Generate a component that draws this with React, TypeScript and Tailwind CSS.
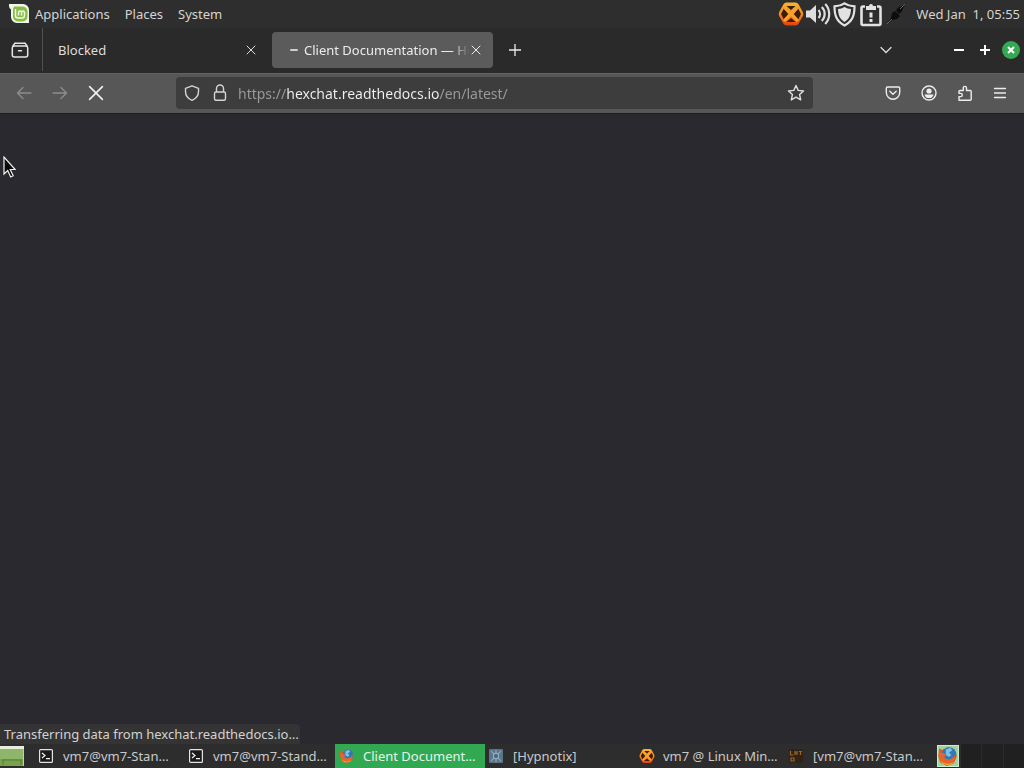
import React from "react";

type IconProps = { className?: string };

const MintLogo = () => (
  <svg width="20" height="20" viewBox="0 0 20 20" aria-hidden="true">
    <path d="M0 0h14a6 6 0 0 1 6 6v13H8a6 6 0 0 1-6-6V5.500A4 4 0 0 1 0 2z" fill="#f1f6ea" />
    <path d="M5 2.500h8.500a5 5 0 0 1 5 5v5a5 5 0 0 1-5 5h-4.500a5 5 0 0 1-5-5V5z" fill="#86be43" />
    <path d="M6.500 5v6.500a2.500 2.500 0 0 0 2.500 2.500h4a2.500 2.500 0 0 0 2.500-2.500V8.500a1.500 1.500 0 0 0-3 0v3M12.500 8.500a1.500 1.500 0 0 0-3 0v3" fill="none" stroke="#f5faee" strokeWidth="1.500" />
  </svg>
);

const HexChatIcon = ({ size }: { size: number }) => (
  <svg width={size} height={size} viewBox="0 0 26 26" aria-hidden="true">
    <defs>
      <linearGradient id="hexFill" x1="0" y1="0" x2="0" y2="1">
        <stop offset="0" stopColor="#fbb62c" />
        <stop offset="0.500" stopColor="#f58a1f" />
        <stop offset="1" stopColor="#e2400f" />
      </linearGradient>
    </defs>
    <path d="M8.500 1.500h9q2 0 3 1.800l4.300 7.700q1 2 0 4l-4.300 7.700q-1 1.800-3 1.800h-9q-2 0-3-1.800L1.200 15q-1-2 0-4l4.300-7.700q1-1.800 3-1.800z" fill="url(#hexFill)" />
    <path d="M8.500 5h9l-4.500 4zM8.500 21h9L13 17zM5.800 7.500l4.400 5.500-4.400 5.500L3 13zM20.200 7.500L15.800 13l4.400 5.500L23 13z" fill="#3b1d10" />
    <path d="M6 6l14 14M20 6L6 20" stroke="#fba22a" strokeWidth="3" />
  </svg>
);

const VolumeIcon = () => (
  <svg width="25" height="24" viewBox="0 0 25 24" fill="none" stroke="#dedede" strokeWidth="2.200" aria-hidden="true">
    <path d="M0 8.500h4L10 3v18l-6-5.500H0z" fill="#dedede" stroke="none" />
    <path d="M12.500 8a6 6 0 0 1 0 8M15.800 5a10 10 0 0 1 0 14M19.200 2a14.500 14.500 0 0 1 0 20" />
  </svg>
);

const UpdateShield = () => (
  <svg width="23" height="25" viewBox="0 0 23 25" aria-hidden="true">
    <path d="M11.500 1.400C8.500 3.500 5.500 4.200 1.500 4.400c0 9 2 14.800 10 19.100 8-4.300 10-10.100 10-19.100-4-.2-7-.9-10-3z" fill="none" stroke="#e2e2e2" strokeWidth="2.200" />
    <path d="M11.500 5C9.300 6.300 7.400 6.800 5 7c.3 6.200 1.800 10 6.500 12.900C16.200 17 17.700 13.200 18 7c-2.400-.2-4.300-.7-6.500-2z" fill="#e2e2e2" />
  </svg>
);

const ReportIcon = () => (
  <svg width="22" height="25" viewBox="0 0 22 25" aria-hidden="true">
    <path d="M5 4.500H3a1.500 1.500 0 0 0-1.500 1.500v15.500A1.500 1.500 0 0 0 3 23h16a1.500 1.500 0 0 0 1.500-1.500V6A1.500 1.500 0 0 0 19 4.500h-2" fill="none" stroke="#e2e2e2" strokeWidth="2.600" />
    <path d="M6 8V4h3a2 2 0 0 1 4 0h3v4z" fill="#e2e2e2" />
    <path d="M9.500 10.500h3v5h-3zM9.500 17h3v3h-3z" fill="#e2e2e2" />
  </svg>
);

const PlugIcon = () => (
  <svg width="20" height="22" viewBox="0 0 20 22" aria-hidden="true">
    <path d="M1 21l4-6 1-5 3-2 5 5-3 3-5 1zM10 7l3-3 5-2 2-2-2.500 4-2 5-3 2z" fill="#0c0c0c" />
    <path d="M1 21l5-5M14 6l5-5" stroke="#686868" />
  </svg>
);

const RecentIcon = () => (
  <svg width="18" height="18" viewBox="0 0 18 18" fill="none" stroke="#e6e6e6" strokeWidth="1.500" strokeLinecap="round" aria-hidden="true">
    <path d="M4.200 2.200h9.600M3.300 5h11.400a2 2 0 0 1 2 2v7a2 2 0 0 1-2 2H3.300a2 2 0 0 1-2-2V7a2 2 0 0 1 2-2zM7.500 9.700h3" />
    <path d="M2 4.800l2-2.500M16 4.800l-2-2.500" />
  </svg>
);

const CrossIcon = ({ className }: IconProps) => (
  <svg className={className} viewBox="0 0 10 10" fill="none" stroke="currentColor" strokeLinecap="round" aria-hidden="true">
    <path d="M1 1l8 8M9 1L1 9" />
  </svg>
);

const ArrowIcon = ({ className }: IconProps) => (
  <svg className={className} width="16" height="16" viewBox="0 0 16 16" fill="none" stroke="#8d8d8d" strokeWidth="1.300" strokeLinecap="round" strokeLinejoin="round" aria-hidden="true">
    <path d="M15 8H1.500M7 2.500L1.500 8 7 13.500" />
  </svg>
);

const TrackingShield = () => (
  <svg width="16" height="16" viewBox="0 0 16 16" fill="none" stroke="#d4d4d4" strokeWidth="1.400" strokeLinejoin="round" aria-hidden="true">
    <path d="M8 .8l6.500 2.500v3.200c0 3.800-2 7-6.500 8.800-4.500-1.800-6.500-5-6.500-8.800V3.300z" />
  </svg>
);

const LockIcon = () => (
  <svg width="16" height="18" viewBox="0 0 16 18" fill="none" stroke="#d4d4d4" strokeWidth="1.400" aria-hidden="true">
    <path d="M4.500 8V4.500a3.500 3.500 0 0 1 7 0V8" />
    <rect x="2.500" y="8" width="11" height="8.300" rx="1.500" />
  </svg>
);

const StarIcon = () => (
  <svg width="18" height="18" viewBox="0 0 18 18" fill="none" stroke="#e0e0e0" strokeWidth="1.400" strokeLinejoin="round" aria-hidden="true">
    <path d="M9 1.500l2.200 4.900 5.300.6-3.900 3.600 1.100 5.300L9 13.200l-4.700 2.700 1.100-5.300L1.500 7l5.300-.6z" />
  </svg>
);

const PocketIcon = () => (
  <svg width="16" height="16" viewBox="0 0 16 16" fill="none" stroke="#ededed" strokeWidth="1.400" strokeLinecap="round" strokeLinejoin="round" aria-hidden="true">
    <path d="M2.500 2h11a1.200 1.200 0 0 1 1.200 1.200v4.300a6.700 6.700 0 0 1-13.400 0V3.200A1.200 1.200 0 0 1 2.500 2zM4.800 6.300L8 9.300l3.200-3" />
  </svg>
);

const AccountIcon = () => (
  <svg width="16" height="16" viewBox="0 0 16 16" aria-hidden="true">
    <circle cx="8" cy="8" r="7" fill="none" stroke="#ededed" strokeWidth="1.400" />
    <circle cx="8" cy="6" r="2.600" fill="#ededed" />
    <path d="M3.500 9.400h9c-.3 2.200-2.200 3.700-4.500 3.700s-4.200-1.500-4.500-3.700z" fill="#ededed" />
  </svg>
);

const PuzzleIcon = () => (
  <svg width="16" height="17" viewBox="0 0 16 17" fill="none" stroke="#ededed" strokeWidth="1.400" strokeLinejoin="round" aria-hidden="true">
    <path d="M2 15.300v-3.700h1.700a1.500 1.500 0 0 0 0-3.200H2V6.500a1 1 0 0 1 1-1h3.300V3a1.600 1.600 0 0 1 3.200 0v2.500h3.700a1 1 0 0 1 1 1v7.800a1 1 0 0 1-1 1z" />
  </svg>
);

const MenuIcon = () => (
  <svg width="14" height="12" viewBox="0 0 14 12" stroke="#ededed" strokeWidth="1.300" strokeLinecap="round" aria-hidden="true">
    <path d="M1.500 1.500h11M1.500 6h11M1.500 10.500h11" />
  </svg>
);

const TerminalIcon = () => (
  <svg width="14" height="14" viewBox="0 0 14 14" aria-hidden="true">
    <rect x=".6" y=".6" width="12.800" height="12.800" rx="1" fill="#1b1b1b" stroke="#e4e4e4" strokeWidth="1.200" />
    <path d="M3 4l3 2.500L3 9M7 9.700h4" fill="none" stroke="#f4f4f4" strokeWidth="1.200" />
  </svg>
);

const FirefoxIcon = ({ size, boxed }: { size: number; boxed?: boolean }) => (
  <svg width={size} height={size} viewBox="0 0 20 20" aria-hidden="true">
    {boxed && <rect x=".5" y=".5" width="19" height="19" fill="#a5cf9c" stroke="#c7ecd2" />}
    <path d="M2 3l2.500 1.500L10 2l6 2 2 6-2.500 6.500L9 19l-6-3-1.800-6z" fill="#dc5a24" />
    <circle cx="11" cy="8.500" r="6.500" fill="#3577b4" />
    <path d="M8 4l4-1.500 2 2-3 2.500 2 2-2 2-3-2z" fill="#78c3e6" />
    <path d="M2 4c0 2 1.500 3 4 3.500L8.500 9 6.500 11c2 3 6 3 10.500-2-.5 6-4 9-8 9-5 0-8-6-7-14z" fill="#e5662a" />
    <path d="M3 14c3 4 9 4 13 1-2 3-10 5-13-1z" fill="#f7c443" />
  </svg>
);

const HypnotixIcon = () => (
  <svg width="14" height="14" viewBox="0 0 14 14" aria-hidden="true">
    <rect width="14" height="14" rx="1" fill="#597589" />
    <path d="M2 2l3 3M12 2L9 5M2 12l3-3M12 12L9 9M7 1v3M7 10v3" stroke="#8ba6b6" strokeWidth="1.300" />
    <circle cx="7" cy="7" r="2.700" fill="#4a687e" stroke="#a2bac8" />
  </svg>
);

const ChatWindowIcon = () => (
  <svg width="14" height="14" viewBox="0 0 14 14" aria-hidden="true">
    <rect width="14" height="14" fill="#302419" />
    <path d="M1.500 2v4h3M6 2v4M6 4h2M8 2v4M10 2.500h3M11.500 2v4M2 9h3v3H2z" fill="none" stroke="#98662e" strokeWidth="1.200" />
  </svg>
);

const DesktopIcon = () => (
  <svg width="24" height="20" viewBox="0 0 24 20" aria-hidden="true">
    <rect width="24" height="20" fill="#77a34b" />
    <path d="M0 0h24v3H0z" fill="#e8edde" />
    <path d="M0 3h23v10H0z" fill="#8fb569" />
    <path d="M2 14h20M3 14v5M21 14v5" stroke="#577c35" />
    <path d="M23.500 3v17" stroke="#bed1a8" />
  </svg>
);

const tasks = [
  { label: "vm7@vm7-Stan…", icon: <TerminalIcon /> },
  { label: "vm7@vm7-Stand…", icon: <TerminalIcon /> },
  { label: "Client Document…", icon: <FirefoxIcon size={16} />, active: true },
  { label: "[Hypnotix]", icon: <HypnotixIcon /> },
  { label: "vm7 @ Linux Min…", icon: <HexChatIcon size={16} /> },
  { label: "[vm7@vm7-Stan…", icon: <ChatWindowIcon /> },
];

function TopPanel() {
  return (
    <header className="flex h-7 shrink-0 items-center bg-[#2e2e2e] pr-1 text-[#d4d4d4]">
      <nav className="flex items-center gap-[15px] pl-[9px]">
        <button className="flex items-center gap-1.5">
          <MintLogo />
          Applications
        </button>
        <button>Places</button>
        <button>System</button>
      </nav>
      <div className="ml-auto flex items-center gap-0.5">
        <button aria-label="HexChat"><HexChatIcon size={26} /></button>
        <button aria-label="Volume"><VolumeIcon /></button>
        <button aria-label="Update manager"><UpdateShield /></button>
        <button aria-label="System reports" className="ml-0.5"><ReportIcon /></button>
        <button aria-label="Network" className="ml-0.5"><PlugIcon /></button>
        <time className="ml-2 whitespace-pre">Wed Jan  1, 05:55</time>
      </div>
    </header>
  );
}

function TabBar() {
  return (
    <div className="flex h-[45px] shrink-0 items-center bg-[#2a2a2a] pr-1 pb-0.5 text-[#dddddd]">
      <button aria-label="Recent browsing" className="flex w-[42px] shrink-0 justify-center pr-0.5">
        <RecentIcon />
      </button>
      <div className="flex h-full items-center border-l border-[#505050]">
        <div className="flex w-[229px] items-center justify-between pr-4 pl-[15px]">
          <button>Blocked</button>
          <button aria-label="Close Blocked"><CrossIcon className="size-2.5" /></button>
        </div>
        <div className="flex h-9 w-[221px] items-center rounded bg-[#5b5b5b] pr-3 pl-[18px] text-[#ececec]">
          <span className="mr-1.5 h-0.5 w-2 shrink-0 rounded-full bg-[#cfcfcf]" />
          <button className="min-w-0 flex-1 overflow-hidden mask-r-from-90% mask-r-to-100% text-left whitespace-nowrap">
            Client Documentation — HexChat
          </button>
          <button aria-label="Close Client Documentation" className="ml-0.5"><CrossIcon className="size-2.5" /></button>
        </div>
        <button aria-label="New tab" className="ml-4">
          <svg width="12" height="12" viewBox="0 0 12 12" stroke="#ececec" strokeWidth="1.300" aria-hidden="true">
            <path d="M6 0v12M0 6h12" />
          </svg>
        </button>
      </div>
      <div className="ml-auto flex items-center">
        <button aria-label="List all tabs" className="mr-[62px]">
          <svg width="12" height="8" viewBox="0 0 12 8" fill="none" stroke="#dddddd" strokeWidth="1.300" strokeLinecap="round" aria-hidden="true">
            <path d="M1 1.500l5 5 5-5" />
          </svg>
        </button>
        <button aria-label="Minimize" className="mr-4">
          <svg width="10" height="10" viewBox="0 0 10 10" stroke="#ffffff" strokeWidth="2" aria-hidden="true"><path d="M0 5h10" /></svg>
        </button>
        <button aria-label="Maximize" className="mr-3">
          <svg width="10" height="10" viewBox="0 0 10 10" stroke="#ffffff" strokeWidth="2" aria-hidden="true"><path d="M0 5h10M5 0v10" /></svg>
        </button>
        <button aria-label="Close window">
          <svg width="18" height="18" viewBox="0 0 18 18" aria-hidden="true">
            <circle cx="9" cy="9" r="9" fill="#35a854" />
            <path d="M6 6l6 6M12 6l-6 6" stroke="#ffffff" strokeWidth="2" />
          </svg>
        </button>
      </div>
    </div>
  );
}

function Toolbar() {
  return (
    <div className="flex h-[41px] shrink-0 items-center border-t border-b border-t-[#626262] border-b-[#1c1b20] bg-[#575757] pr-[17px] pb-px pl-4">
      <div className="flex shrink-0 items-center gap-5">
        <button aria-label="Back" disabled><ArrowIcon /></button>
        <button aria-label="Forward" disabled><ArrowIcon className="rotate-180" /></button>
        <button aria-label="Stop" className="text-[#f0f0f0]"><CrossIcon className="size-4" /></button>
      </div>
      <div className="ml-[72px] flex h-8 min-w-0 flex-1 items-center rounded bg-[#3d3d3d] px-2">
        <button aria-label="Tracking protection"><TrackingShield /></button>
        <button aria-label="Site information" className="ml-3"><LockIcon /></button>
        <input
          aria-label="Address"
          type="text"
          defaultValue="https://hexchat.readthedocs.io/en/latest/"
          className="ml-2.5 h-6 min-w-0 flex-1 bg-[linear-gradient(90deg,#9b9b9b_0_48px,#f2f2f2_48px_201px,#9b9b9b_201px)] bg-clip-text text-[14px] text-transparent caret-white outline-none"
        />
        <button aria-label="Bookmark this page"><StarIcon /></button>
      </div>
      <div className="ml-[72px] flex shrink-0 items-center gap-5">
        <button aria-label="Save to Pocket"><PocketIcon /></button>
        <button aria-label="Account"><AccountIcon /></button>
        <button aria-label="Extensions"><PuzzleIcon /></button>
        <button aria-label="Open application menu"><MenuIcon /></button>
      </div>
    </div>
  );
}

function Taskbar() {
  return (
    <footer className="flex h-6 shrink-0 items-center bg-[#2d2d2d] text-[#c9c9c9]">
      <button aria-label="Show desktop" className="mr-[11px] shrink-0"><DesktopIcon /></button>
      {tasks.map((task) => (
        <button
          key={task.label}
          className={
            task.active
              ? "flex h-full w-[150px] min-w-0 items-center bg-[#32a852] pl-1 text-[#e2f6e7]"
              : "flex h-full w-[150px] min-w-0 items-center pl-1"
          }
        >
          <span className="flex w-6 shrink-0">{task.icon}</span>
          <span className="overflow-hidden whitespace-nowrap">{task.label}</span>
        </button>
      ))}
      <button aria-label="Firefox workspace" className="ml-0.5 shrink-0"><FirefoxIcon size={22} boxed /></button>
      <div className="ml-0.5 grid h-full min-w-0 flex-1 grid-cols-3 gap-px bg-[#2a2a2a]">
        <button aria-label="Workspace 2" className="bg-[#202020]" />
        <button aria-label="Workspace 3" className="bg-[#202020]" />
        <button aria-label="Workspace 4" className="bg-[#202020]" />
      </div>
    </footer>
  );
}

export default function App() {
  return (
    <div className="relative flex min-h-screen flex-col bg-[#2a292f] font-['Noto_Sans','Open_Sans',sans-serif] text-[13px] leading-5">
      <TopPanel />
      <TabBar />
      <Toolbar />
      <main className="flex flex-1 flex-col items-start justify-end">
        <p role="status" className="h-5 w-[300px] rounded-tr bg-[#343434] pl-1 whitespace-nowrap text-[#d2d2d2]">
          Transferring data from hexchat.readthedocs.io…
        </p>
      </main>
      <Taskbar />
      <svg className="pointer-events-none absolute top-[156px] left-[3px]" width="13" height="22" viewBox="0 0 13 22" aria-hidden="true">
        <path d="M1 1v17l3.700-3.500 3 6.500 2.500-1.200-3-6.300h5z" fill="#080808" stroke="#f0f0f0" strokeWidth="1.200" />
      </svg>
    </div>
  );
}
